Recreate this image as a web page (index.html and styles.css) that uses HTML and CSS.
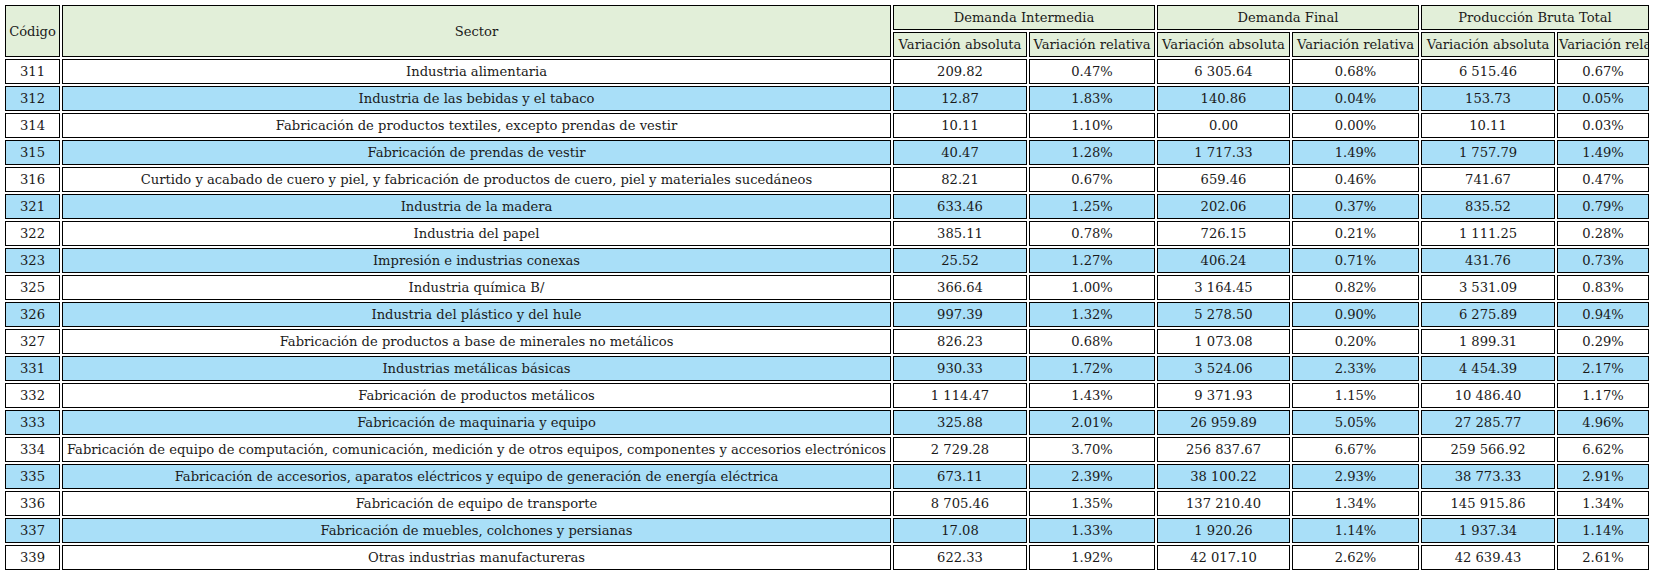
FILE: index.html
```html
<!DOCTYPE html>
<html lang="es">
<head>
<meta charset="utf-8">
<title>Variación de la producción por sector</title>
<link rel="stylesheet" href="styles.css">
</head>
<body>
<table class="grid">
  <colgroup>
    <col class="c-code">
    <col class="c-sector">
    <col class="c-abs1">
    <col class="c-rel1">
    <col class="c-abs2">
    <col class="c-rel2">
    <col class="c-abs3">
    <col class="c-rel3">
  </colgroup>
  <thead>
    <tr>
      <th rowspan="2">Código</th>
      <th rowspan="2">Sector</th>
      <th colspan="2">Demanda Intermedia</th>
      <th colspan="2">Demanda Final</th>
      <th colspan="2">Producción Bruta Total</th>
    </tr>
    <tr>
      <th>Variación absoluta</th>
      <th>Variación relativa</th>
      <th>Variación absoluta</th>
      <th>Variación relativa</th>
      <th>Variación absoluta</th>
      <th>Variación relativa</th>
    </tr>
  </thead>
  <tbody>
    <tr><td>311</td><td>Industria alimentaria</td><td>209.82</td><td>0.47%</td><td>6 305.64</td><td>0.68%</td><td>6 515.46</td><td>0.67%</td></tr>
    <tr class="alt"><td>312</td><td>Industria de las bebidas y el tabaco</td><td>12.87</td><td>1.83%</td><td>140.86</td><td>0.04%</td><td>153.73</td><td>0.05%</td></tr>
    <tr><td>314</td><td>Fabricación de productos textiles, excepto prendas de vestir</td><td>10.11</td><td>1.10%</td><td>0.00</td><td>0.00%</td><td>10.11</td><td>0.03%</td></tr>
    <tr class="alt"><td>315</td><td>Fabricación de prendas de vestir</td><td>40.47</td><td>1.28%</td><td>1 717.33</td><td>1.49%</td><td>1 757.79</td><td>1.49%</td></tr>
    <tr><td>316</td><td>Curtido y acabado de cuero y piel, y fabricación de productos de cuero, piel y materiales sucedáneos</td><td>82.21</td><td>0.67%</td><td>659.46</td><td>0.46%</td><td>741.67</td><td>0.47%</td></tr>
    <tr class="alt"><td>321</td><td>Industria de la madera</td><td>633.46</td><td>1.25%</td><td>202.06</td><td>0.37%</td><td>835.52</td><td>0.79%</td></tr>
    <tr><td>322</td><td>Industria del papel</td><td>385.11</td><td>0.78%</td><td>726.15</td><td>0.21%</td><td>1 111.25</td><td>0.28%</td></tr>
    <tr class="alt"><td>323</td><td>Impresión e industrias conexas</td><td>25.52</td><td>1.27%</td><td>406.24</td><td>0.71%</td><td>431.76</td><td>0.73%</td></tr>
    <tr><td>325</td><td>Industria química B/</td><td>366.64</td><td>1.00%</td><td>3 164.45</td><td>0.82%</td><td>3 531.09</td><td>0.83%</td></tr>
    <tr class="alt"><td>326</td><td>Industria del plástico y del hule</td><td>997.39</td><td>1.32%</td><td>5 278.50</td><td>0.90%</td><td>6 275.89</td><td>0.94%</td></tr>
    <tr><td>327</td><td>Fabricación de productos a base de minerales no metálicos</td><td>826.23</td><td>0.68%</td><td>1 073.08</td><td>0.20%</td><td>1 899.31</td><td>0.29%</td></tr>
    <tr class="alt"><td>331</td><td>Industrias metálicas básicas</td><td>930.33</td><td>1.72%</td><td>3 524.06</td><td>2.33%</td><td>4 454.39</td><td>2.17%</td></tr>
    <tr><td>332</td><td>Fabricación de productos metálicos</td><td>1 114.47</td><td>1.43%</td><td>9 371.93</td><td>1.15%</td><td>10 486.40</td><td>1.17%</td></tr>
    <tr class="alt"><td>333</td><td>Fabricación de maquinaria y equipo</td><td>325.88</td><td>2.01%</td><td>26 959.89</td><td>5.05%</td><td>27 285.77</td><td>4.96%</td></tr>
    <tr><td>334</td><td>Fabricación de equipo de computación, comunicación, medición y de otros equipos, componentes y accesorios electrónicos</td><td>2 729.28</td><td>3.70%</td><td>256 837.67</td><td>6.67%</td><td>259 566.92</td><td>6.62%</td></tr>
    <tr class="alt"><td>335</td><td>Fabricación de accesorios, aparatos eléctricos y equipo de generación de energía eléctrica</td><td>673.11</td><td>2.39%</td><td>38 100.22</td><td>2.93%</td><td>38 773.33</td><td>2.91%</td></tr>
    <tr><td>336</td><td>Fabricación de equipo de transporte</td><td>8 705.46</td><td>1.35%</td><td>137 210.40</td><td>1.34%</td><td>145 915.86</td><td>1.34%</td></tr>
    <tr class="alt"><td>337</td><td>Fabricación de muebles, colchones y persianas</td><td>17.08</td><td>1.33%</td><td>1 920.26</td><td>1.14%</td><td>1 937.34</td><td>1.14%</td></tr>
    <tr><td>339</td><td>Otras industrias manufactureras</td><td>622.33</td><td>1.92%</td><td>42 017.10</td><td>2.62%</td><td>42 639.43</td><td>2.61%</td></tr>
  </tbody>
</table>
</body>
</html>
```
FILE: styles.css
```css
html, body {
  background: #ffffff;
}
body {
  margin: 3px;
  font-family: "DejaVu Serif", serif;
  font-size: 13.1px;
  color: #1a1a1a;
}
.grid {
  table-layout: fixed;
  width: 1648px;
  border-collapse: separate;
  border-spacing: 2px;
}
.c-code { width: 55px; }
.c-sector { width: 829px; }
.c-abs1 { width: 134px; }
.c-rel1 { width: 126px; }
.c-abs2 { width: 133px; }
.c-rel2 { width: 127px; }
.c-abs3 { width: 134px; }
.c-rel3 { width: 92px; }
.grid th,
.grid td {
  border: 1px solid #000000;
  padding: 0 1px;
  line-height: 23px;
  height: 23px;
  text-align: center;
  white-space: nowrap;
  overflow: hidden;
  font-weight: normal;
}
.grid th {
  background: #e2efd9;
}
.grid td {
  background: #ffffff;
}
.grid tr.alt td {
  background: #a9dff8;
}
```
